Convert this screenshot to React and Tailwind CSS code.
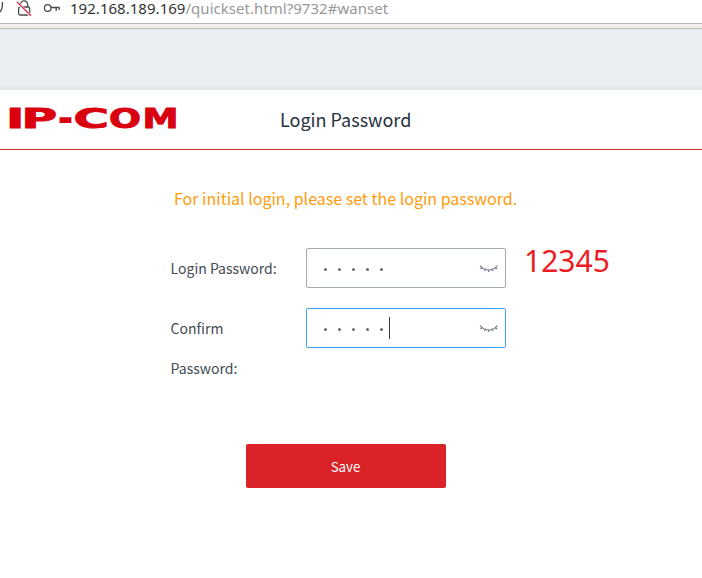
function AddressBar() {
  return (
    <div className="flex h-7 w-full shrink-0 flex-col overflow-hidden bg-[#f1efee]">
      <div className="flex h-[23px] shrink-0 items-start bg-white">
        <svg className="h-[23px] w-[70px] shrink-0" viewBox="0 0 70 23" fill="none" stroke="#4a4a4a" strokeWidth="1.3">
          <path d="M2.4 2v3c0 3.500-1.200 6.200-3.600 8" />
          <path d="M20.500 7V4.500a3.600 3.600 0 0 1 7.200 0V7" />
          <rect x="18.600" y="7" width="11" height="8" rx="1.500" />
          <path d="M17 2.500 30.500 15.500" stroke="#fff" strokeWidth="3" />
          <path d="M17 2 31 15.700" stroke="#e22850" strokeWidth="1.300" />
          <circle cx="47.700" cy="8" r="3.300" />
          <path d="M51 7.500h8.500M56.200 7.500v3.500M59.200 7.500v2.500" />
        </svg>
        <div className="whitespace-nowrap font-['Noto_Sans',sans-serif] text-[15px] leading-[16px] tracking-[0.03px] text-[#989898]">
          <span className="text-[#333]">192.168.189.169</span>/quickset.html?9732#wanset
        </div>
      </div>
      <div className="h-[5px] shrink-0 border-t border-[#bab6b2]" />
    </div>
  );
}

const LOGO_GLYPHS = [
  { char: "I", x: 6, width: 18.4, stroke: 0.9 },
  { char: "P", x: 21.4, width: 35.6, stroke: 0.9 },
  { char: "-", x: 59, width: 13, stroke: 1.8 },
  { char: "C", x: 73.5, width: 35.4, stroke: 0.9 },
  { char: "O", x: 109, width: 32, stroke: 0.9 },
  { char: "M", x: 142.4, width: 36, stroke: 0.9 },
];

function Logo() {
  return (
    <svg className="h-12 w-[180px] shrink-0" viewBox="0 0 180 48" aria-label="IP-COM">
      {LOGO_GLYPHS.map(({ char, x, width, stroke }) => (
        <text
          key={char}
          x={x}
          y="32.500"
          textLength={width}
          lengthAdjust="spacingAndGlyphs"
          strokeWidth={stroke}
          className="fill-[#d9000f] stroke-[#d9000f] font-['DejaVu_Sans',sans-serif] text-[26px] font-bold"
        >
          {char}
        </text>
      ))}
    </svg>
  );
}

function ClosedEye() {
  return (
    <svg className="h-3 w-5" viewBox="0 0 20 12" fill="none" stroke="#68737e" strokeWidth="1.1">
      <path d="M1 2.500C5.500 8.500 14 8.500 18.500 2.500M1.500 6l2-1.800M5.500 8l1-2.500M9.700 9V6.500M14 8l-1-2.500M18 6l-2-1.800" />
    </svg>
  );
}

function PasswordBox({ focused }) {
  return (
    <div className={`flex h-10 w-[200px] items-center rounded-[2px] border bg-white pl-[17px] pr-[6px] ${focused ? "border-[#409eff]" : "border-[#a3adb8]"}`}>
      <div className="flex gap-[11px]">
        {[0, 1, 2, 3, 4].map((i) => (
          <span key={i} className="mt-[3px] size-[3px] rounded-full bg-[#626b74]" />
        ))}
      </div>
      {focused && <span className="ml-[6px] h-[22px] w-px bg-[#333f4a]" />}
      <div className="ml-auto mt-[2px]">
        <ClosedEye />
      </div>
    </div>
  );
}

export default function App() {
  return (
    <div className="flex h-[578px] w-[702px] flex-col overflow-hidden bg-white font-['Noto_Sans_CJK_SC',sans-serif]">
      <AddressBar />
      <div className="h-[62px] shrink-0 border-t border-[#bfbbb8] bg-linear-to-b from-[#eaedf1] from-90% to-[#e3e7ea]" />
      <header className="flex h-[60px] shrink-0 border-b border-[#d22a30] pt-[5px]">
        <Logo />
        <h1 className="ml-[100px] mt-[9px] whitespace-nowrap text-[18px] leading-[30px] text-[#26323d]">Login Password</h1>
      </header>
      <main className="flex flex-col">
        <p className="ml-[174px] mt-[34px] whitespace-nowrap text-[16px] leading-[28px] text-[#ff9c0c]">
          For initial login, please set the login password.
        </p>
        <div className="ml-[170px] mt-9 flex h-10 text-[14px] leading-[40px] text-[#414b54]">
          <span className="w-[136px] pl-[0.6px]">Login Password:</span>
          <PasswordBox />
          <span className="ml-[18px] -mt-[7px] font-['Noto_Sans',sans-serif] text-[30px] leading-[40px] text-[#ed1c24]">12345</span>
        </div>
        <div className="ml-[170px] mt-5 flex text-[14px] leading-[40px] text-[#414b54]">
          <span className="w-[136px] pl-[0.6px]">
            Confirm
            <br />
            Password:
          </span>
          <PasswordBox focused />
        </div>
        <button className="ml-[246px] mt-[56px] h-11 w-[200px] rounded-[2px] bg-[#d92328] pr-px pt-[2px] text-[13.333px] text-white">Save</button>
      </main>
    </div>
  );
}
